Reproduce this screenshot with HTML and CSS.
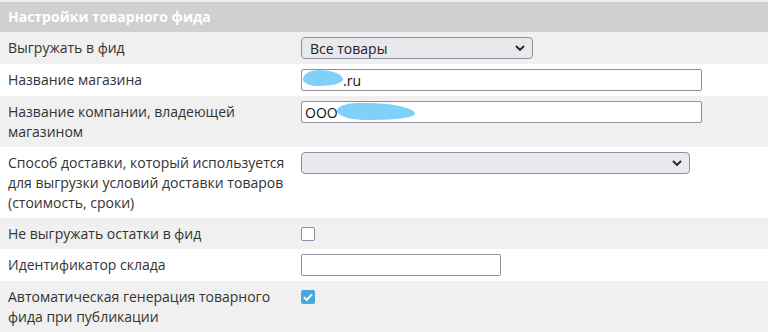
FILE: index.html
```html
<!DOCTYPE html>
<html lang="ru">
<head>
    <meta charset="UTF-8">
    <meta name="viewport" content="width=device-width, initial-scale=1.0">
    <title>Настройки товарного фида</title>
    <link rel="stylesheet" href="styles.css">
</head>
<body>
    <section class="settings">
        <h2 class="settings-title">Настройки товарного фида</h2>

        <div class="row">
            <label class="row-label" for="feed-scope">Выгружать в фид</label>
            <div class="row-control">
                <select id="feed-scope" class="select select-short">
                    <option>Все товары</option>
                    <option>Только в наличии</option>
                </select>
            </div>
        </div>

        <div class="row row-white">
            <label class="row-label" for="shop-name">Название магазина</label>
            <div class="row-control">
                <span class="masked">
                    <input type="text" id="shop-name" class="input input-wide input-shift" value=".ru">
                    <span class="blot blot-shop"></span>
                </span>
            </div>
        </div>

        <div class="row">
            <label class="row-label" for="company">Название компании, владеющей магазином</label>
            <div class="row-control">
                <span class="masked">
                    <input type="text" id="company" class="input input-wide" value="ООО">
                    <span class="blot blot-company"></span>
                </span>
            </div>
        </div>

        <div class="row row-white">
            <label class="row-label" for="delivery">Способ доставки, который используется для выгрузки условий доставки товаров (стоимость, сроки)</label>
            <div class="row-control">
                <select id="delivery" class="select select-long">
                    <option></option>
                </select>
            </div>
        </div>

        <div class="row">
            <label class="row-label" for="no-stock">Не выгружать остатки в фид</label>
            <div class="row-control">
                <input type="checkbox" id="no-stock" class="check">
            </div>
        </div>

        <div class="row row-white">
            <label class="row-label" for="warehouse">Идентификатор склада</label>
            <div class="row-control">
                <input type="text" id="warehouse" class="input input-small">
            </div>
        </div>

        <div class="row row-last">
            <label class="row-label" for="autogen">Автоматическая генерация товарного фида при публикации</label>
            <div class="row-control">
                <input type="checkbox" id="autogen" class="check" checked>
            </div>
        </div>
    </section>
</body>
</html>
```

FILE: styles.css
```css
body {
    margin: 0;
    padding-top: 2px;
    font-family: "Open Sans", "Noto Sans", sans-serif;
    font-size: 14px;
    color: #333;
    background-color: #f0f0f0;
}

.settings {
    background-color: #f0f0f0;
    border-bottom: 3px solid #d0d0d0;
}

.settings-title {
    margin: 0;
    height: 30px;
    padding: 0 8px;
    line-height: 29px;
    font-size: 14px;
    font-weight: bold;
    color: #fff;
    background-color: #d0d0d0;
}

.row {
    display: grid;
    grid-template-columns: 285px 1fr;
    column-gap: 8px;
    padding: 5px 8px;
    line-height: 20px;
    background-color: #f0f0f0;
}

.row-white {
    background-color: #fff;
}

.row-label {
    padding-top: 1px;
}

.row-control {
    display: flex;
    align-items: flex-start;
}

.select {
    appearance: none;
    height: 22px;
    padding: 0 24px 0 8px;
    font-family: inherit;
    font-size: 14px;
    color: #222;
    border: 1px solid #8f8f9d;
    border-radius: 4px;
    background-color: #e9e9ed;
    background-image: url("data:image/svg+xml,%3Csvg xmlns='http://www.w3.org/2000/svg' width='10' height='6' viewBox='0 0 10 6'%3E%3Cpath d='M1 1l4 4 4-4' fill='none' stroke='%23222' stroke-width='1.8'/%3E%3C/svg%3E");
    background-repeat: no-repeat;
    background-position: right 7px center;
}

.select-short {
    width: 232px;
}

.select-long {
    width: 389px;
}

.input {
    box-sizing: border-box;
    height: 22px;
    padding: 0 3px;
    font-family: inherit;
    font-size: 14px;
    color: #111;
    border: 1px solid #8f8f9d;
    border-radius: 2px;
    background: #fff;
}

.input-wide {
    width: 401px;
}

.input-small {
    width: 200px;
}

.input-shift {
    text-indent: 38px;
}

.masked {
    position: relative;
    display: inline-block;
}

.blot {
    position: absolute;
    background-color: #7fd1fa;
    border-radius: 50%;
}

.blot-shop {
    left: 2px;
    top: 1px;
    width: 40px;
    height: 16px;
    border-radius: 40% 60% 60% 40% / 60% 60% 40% 40%;
}

.blot-company {
    left: 36px;
    top: 2px;
    width: 78px;
    height: 17px;
    border-radius: 30% 70% 60% 40% / 50% 70% 40% 60%;
}

.check {
    appearance: none;
    box-sizing: border-box;
    width: 14px;
    height: 14px;
    margin: 4px 0 0;
    border: 1.5px solid #8f8f9d;
    border-radius: 2px;
    background: #fff;
}

.check:checked {
    border-color: #4aa8e0;
    background-color: #4aa8e0;
    background-image: url("data:image/svg+xml,%3Csvg xmlns='http://www.w3.org/2000/svg' width='14' height='14' viewBox='0 0 14 14'%3E%3Cpath d='M3 7.2l2.7 2.7L11 4.4' fill='none' stroke='%23fff' stroke-width='2'/%3E%3C/svg%3E");
    background-position: center;
    background-repeat: no-repeat;
}
```
